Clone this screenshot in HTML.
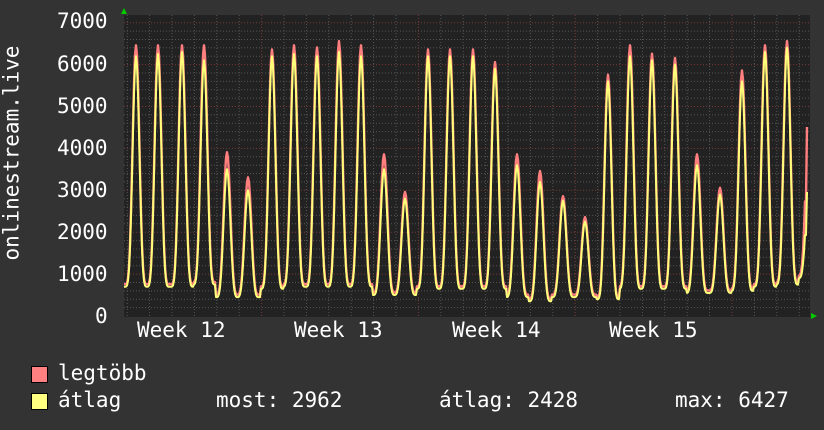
<!DOCTYPE html>
<html><head><meta charset="utf-8"><style>
html,body{margin:0;padding:0;background:#333;}
body{width:824px;height:430px;overflow:hidden;position:relative;font-family:"DejaVu Sans Mono","Liberation Mono",monospace;color:#fff;}
.t{position:absolute;font-size:21px;line-height:21px;white-space:pre;}
.sq{position:absolute;width:15px;height:15px;border:1px solid #000;}
</style></head><body>
<svg id="g" width="824" height="430" style="position:absolute;left:0;top:0">
<rect x="124" y="15" width="686" height="302" fill="#222"/>
<g id="grid"></g>
<path id="mx" fill="none" stroke="#ff7f7f" stroke-width="2.4" stroke-linejoin="round"/>
<path id="av" fill="none" stroke="#ffff7a" stroke-width="2" stroke-linejoin="round"/>
<polygon points="121,14 127,14 124,8" fill="#0c0"/>
<polygon points="811,313 811,319 817,316" fill="#0c0"/>
</svg>
<div class="t" style="left:57px;top:11px">7000</div>
<div class="t" style="left:57px;top:54px">6000</div>
<div class="t" style="left:57px;top:96px">5000</div>
<div class="t" style="left:57px;top:138px">4000</div>
<div class="t" style="left:57px;top:180px">3000</div>
<div class="t" style="left:57px;top:222px">2000</div>
<div class="t" style="left:57px;top:264px">1000</div>
<div class="t" style="left:95px;top:306px">0</div>
<div class="t" style="left:-83px;top:155px;width:190px;text-align:center;transform:rotate(-90deg)">onlinestream.live</div>
<div class="t" style="left:137px;top:320px">Week 12</div>
<div class="t" style="left:294px;top:320px">Week 13</div>
<div class="t" style="left:452px;top:320px">Week 14</div>
<div class="t" style="left:609px;top:320px">Week 15</div>
<div class="sq" style="left:31px;top:366px;background:#ff8080"></div>
<div class="sq" style="left:31px;top:393px;background:#ffff80"></div>
<div class="t" style="left:58px;top:363px">legtöbb</div>
<div class="t" style="left:58px;top:390px">átlag</div>
<div class="t" style="left:216px;top:390px">most: 2962</div>
<div class="t" style="left:439px;top:390px">átlag: 2428</div>
<div class="t" style="left:675px;top:390px">max: 6427</div>
<script>
var L=124,R=809,T=15,B=316,S=(B-22.7)/7000;
function Y(v){return B-v*S;}
var g='';
for(var v=200;v<=7000;v+=200){var y=Y(v).toFixed(1);var maj=v%1000==0;
g+='<line x1="124" x2="809" y1="'+y+'" y2="'+y+'" stroke="'+(maj?'#7a3a3a':'#555')+'" stroke-dasharray="1,2" stroke-width="1"/>';}
for(var k=-6;k<30;k++){var x=732-22.4*k;if(x<=L||x>=R)continue;var maj=(k%7==0);
g+='<line y1="15" y2="316" x1="'+x.toFixed(1)+'" x2="'+x.toFixed(1)+'" stroke="'+(maj?'#7a3a3a':'#555')+'" stroke-dasharray="1,2"/>';}
document.getElementById('grid').innerHTML=g;
var P=[[136,6400,6200,700],[158,6400,6250,700],[182,6400,6300,700],[204,6400,6100,750],[227,3850,3500,450],[248,3250,3000,450],[272,6300,6200,650],[294,6400,6250,700],[317,6350,6200,700],[339,6500,6300,700],[361,6400,6200,700],[384,3800,3500,500],[405,2900,2800,500],[428,6300,6200,650],[450,6300,6200,650],[473,6300,6200,650],[495,6000,5900,650],[517,3800,3600,450],[540,3400,3200,350],[563,2800,2750,450],[585,2300,2250,450],[608,5700,5600,400],[630,6400,6200,650],[652,6200,6100,650],[675,6100,6000,650],[697,3800,3600,550],[720,3000,2900,550],[742,5800,5600,600],[765,6400,6300,700],[787,6500,6400,750],[809,4450,2960,900]];
function val(x,i){var best=null,bd=1e9;for(var j=0;j<P.length;j++){var d=Math.abs(x-P[j][0]);if(d<bd){bd=d;best=P[j];}}
var tr=best[3],d=(x-best[0])/22.4;var f=Math.pow((1+Math.cos(2*Math.PI*d))/2,2.2);
if(best[0]==809&&x>=805){return tr+(best[i]-tr)*(x>=807?1:0.5);}
return tr+(best[i]-tr)*f;}
function path(i){var s='';for(var x=L;x<=807;x+=1){var v=val(x,i)+(i==1?60:0);s+=(x==L?'M':'L')+x+','+Y(v).toFixed(1);}return s;}
document.getElementById('mx').setAttribute('d',path(1));
document.getElementById('av').setAttribute('d',path(2));
</script>
</body></html>
